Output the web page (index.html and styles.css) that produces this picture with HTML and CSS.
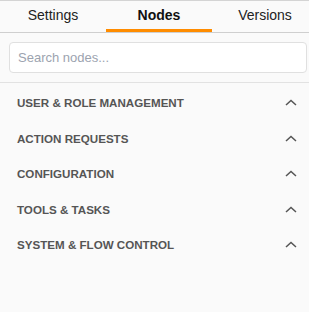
FILE: index.html
```html
<!DOCTYPE html>
<html>
<head>
<meta charset="utf-8">
<link rel="stylesheet" href="styles.css">
</head>
<body>
<div class="panel">
  <div class="tabs">
    <div class="tab">Settings</div>
    <div class="tab active">Nodes</div>
    <div class="tab">Versions</div>
  </div>
  <div class="search-wrap">
    <input class="search" type="text" placeholder="Search nodes...">
  </div>
  <div class="sections">
    <div class="section"><span>USER &amp; ROLE MANAGEMENT</span><svg class="chev" width="12" height="7" viewBox="0 0 12 7"><path d="M1 6 L6 1.5 L11 6" fill="none" stroke="#555" stroke-width="1.5"/></svg></div>
    <div class="section"><span>ACTION REQUESTS</span><svg class="chev" width="12" height="7" viewBox="0 0 12 7"><path d="M1 6 L6 1.5 L11 6" fill="none" stroke="#555" stroke-width="1.5"/></svg></div>
    <div class="section"><span>CONFIGURATION</span><svg class="chev" width="12" height="7" viewBox="0 0 12 7"><path d="M1 6 L6 1.5 L11 6" fill="none" stroke="#555" stroke-width="1.5"/></svg></div>
    <div class="section"><span>TOOLS &amp; TASKS</span><svg class="chev" width="12" height="7" viewBox="0 0 12 7"><path d="M1 6 L6 1.5 L11 6" fill="none" stroke="#555" stroke-width="1.5"/></svg></div>
    <div class="section"><span>SYSTEM &amp; FLOW CONTROL</span><svg class="chev" width="12" height="7" viewBox="0 0 12 7"><path d="M1 6 L6 1.5 L11 6" fill="none" stroke="#555" stroke-width="1.5"/></svg></div>
  </div>
</div>
</body>
</html>
```
FILE: styles.css
```css
html, body {
  margin: 0;
  padding: 0;
  background: #fafafa;
  overflow: hidden;
}
body {
  font-family: "Liberation Sans", Arial, sans-serif;
  width: 309px;
  height: 312px;
}
.panel {
  border-top: 1px solid #d4d4d4;
  width: 318px;
}
.tabs {
  display: flex;
  height: 31px;
  border-bottom: 1px solid #cfcfcf;
}
.tab {
  width: 106px;
  flex: none;
  box-sizing: border-box;
  text-align: center;
  font-size: 14px;
  color: #222;
  line-height: 28px;
  border-bottom: 3px solid transparent;
}
.tab.active {
  font-weight: bold;
  color: #111;
  border-bottom-color: #ff8c00;
}
.search-wrap {
  padding: 9px 0 9px 9px;
  border-bottom: 1px solid #e2e2e2;
  width: 309px;
  box-sizing: border-box;
}
.search {
  display: block;
  box-sizing: border-box;
  width: 298px;
  height: 31px;
  border: 1px solid #e0e0e0;
  border-radius: 4px;
  background: #fff;
  padding: 0 8px;
  font-family: "Liberation Sans", Arial, sans-serif;
  font-size: 13px;
  outline: none;
}
.search::placeholder {
  color: #9ca3af;
}
.sections {
  width: 309px;
  padding-top: 2px;
}
.section {
  display: flex;
  justify-content: space-between;
  align-items: center;
  height: 35.5px;
  padding: 0 12px 0 17px;
  font-size: 11.6px;
  font-weight: bold;
  color: #555;
}
.chev {
  display: block;
}
```
